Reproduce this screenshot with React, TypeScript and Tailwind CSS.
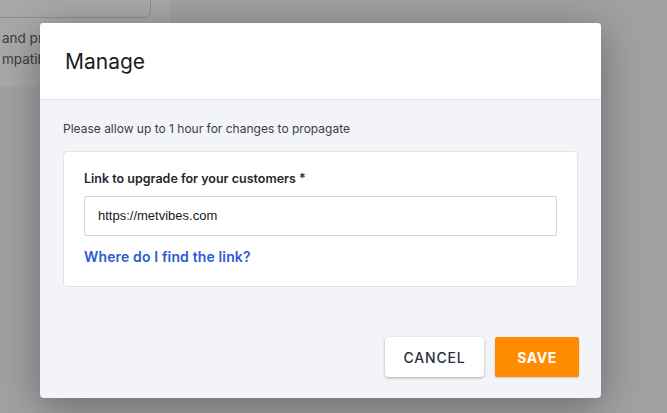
import React from "react";

function BackgroundPage() {
  return (
    <div className="h-[413px] w-[667px] bg-[#a0a1a3] flex">
      <div className="w-[170px] h-[87px] bg-[#a8a8a9] flex flex-col">
        <div className="h-[18px] w-[151px] border-b border-r border-[#8e8e8e] rounded-br-md bg-[#a8a8a9]" />
        <div className="pl-[2px] pt-[10px] text-[13.5px] leading-[21px] text-[#3d3d40]">
          <div className="whitespace-nowrap">and pre</div>
          <div className="whitespace-nowrap">mpatible</div>
        </div>
      </div>
    </div>
  );
}

function ManageModal() {
  return (
    <div className="absolute inset-0 flex items-start">
      <div className="ml-[40px] mt-[23px] w-[561px] h-[375px] rounded-[4px] bg-[#f3f4f8] shadow-[0_8px_40px_rgba(0,0,0,0.35)] flex flex-col overflow-hidden">
        <div className="h-[77px] bg-white border-b border-[#e4e6ec] flex items-center px-[25px]">
          <h2 className="text-[21px] text-[#1d1d22] pt-[1px]">Manage</h2>
        </div>
        <div className="flex-1 flex flex-col px-[23px]">
          <p className="pt-[21px] text-[12px] leading-[16px] text-[#3b3b48]">
            Please allow up to 1 hour for changes to propagate
          </p>
          <div className="mt-[14px] h-[136px] bg-white border border-[#e1e3ea] rounded-[4px] px-[20px] pt-[19px]">
            <label className="block text-[12.5px] font-semibold text-[#26262c] leading-[16px]">
              Link to upgrade for your customers *
            </label>
            <div className="mt-[9px] h-[40px] border border-[#d5d7dc] rounded-[2px] flex items-center px-[13px]">
              <span className="text-[13px] text-[#1a1a1a] font-['Liberation_Sans',Arial,sans-serif]">
                https://metvibes.com
              </span>
            </div>
            <a className="block mt-[11px] text-[14px] font-semibold tracking-[0.01em] text-[#2f5bd0] leading-[20px]">
              Where do I find the link?
            </a>
          </div>
          <div className="mt-auto mb-[21px] mr-[-1px] flex justify-end gap-[11px]">
            <button className="h-[40px] w-[99px] bg-white rounded-[4px] shadow-[0_1px_3px_rgba(0,0,0,0.3)] text-[14px] font-medium tracking-[0.06em] text-[#2b2f3a]">
              CANCEL
            </button>
            <button className="h-[40px] w-[84px] bg-[#ff8c00] rounded-[2px] shadow-[0_1px_2px_rgba(0,0,0,0.2)] text-[14px] font-bold tracking-[0.04em] text-white">
              SAVE
            </button>
          </div>
        </div>
      </div>
    </div>
  );
}

export default function App() {
  return (
    <div className="relative w-[667px] h-[413px] overflow-hidden font-['Inter','Noto_Sans',sans-serif]">
      <BackgroundPage />
      <ManageModal />
    </div>
  );
}
